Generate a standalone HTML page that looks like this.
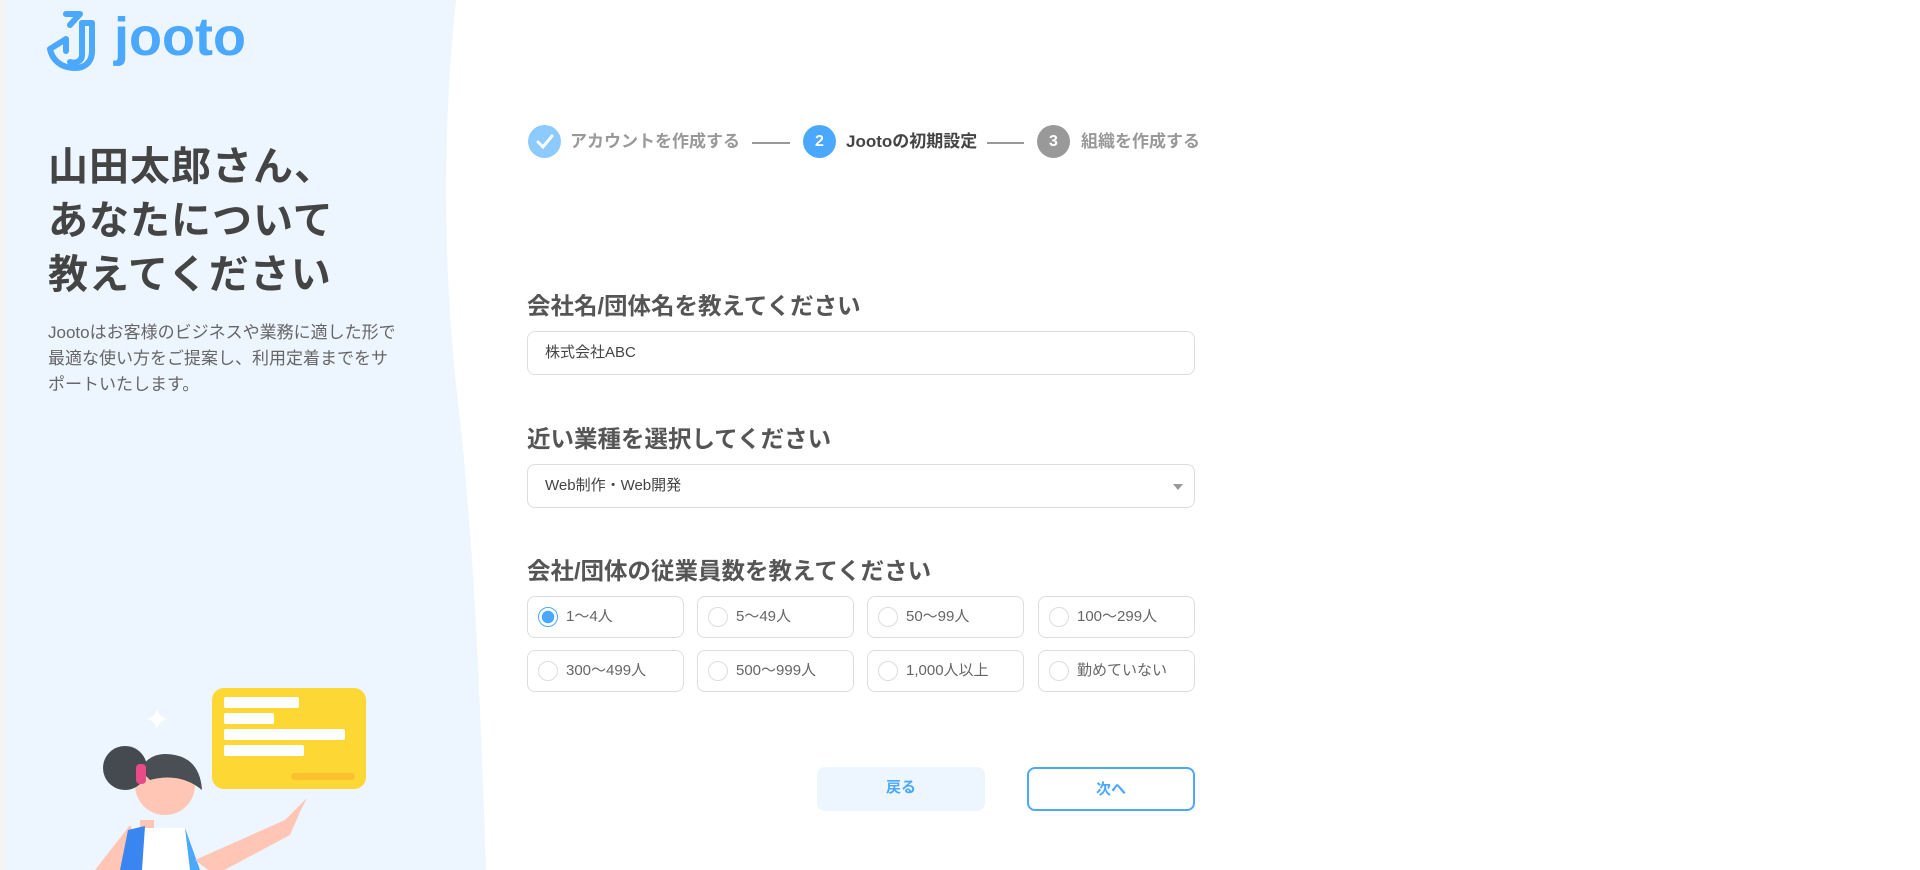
<!DOCTYPE html>
<html><head><meta charset="utf-8"><style>
*{box-sizing:border-box;margin:0;padding:0}
body{width:1920px;height:870px;overflow:hidden;background:#fff;font-family:"Liberation Sans","Noto Sans CJK JP",sans-serif;position:relative;color:#555}
.abs{position:absolute}
.h1{left:48px;top:140px;font-size:40px;font-weight:bold;color:#444;line-height:54px;letter-spacing:1px}
.p{left:48px;top:320px;font-size:17px;color:#666;line-height:26px}
.step{top:130px;font-size:17px;font-weight:bold;color:#999;line-height:24px;white-space:nowrap}
.circ{top:125px;width:33px;height:33px;border-radius:50%;color:#fff;font-size:16px;font-weight:bold;text-align:center;line-height:33px}
.line{top:142px;height:2px;background:#999}
.lbl{left:527px;font-size:23.5px;font-weight:bold;color:#555}
.inp{left:527px;width:668px;height:44px;border:1px solid #ddd;border-radius:8px;font-size:15px;color:#444;padding-left:17px;line-height:42px}
.rb{width:157px;height:42px;border:1px solid #ddd;border-radius:8px;font-size:15px;color:#666;line-height:40px;padding-left:38px}
.rb:before{content:"";position:absolute;left:10px;top:10px;width:20px;height:20px;border:1px solid #ddd;border-radius:50%;box-sizing:border-box}
.rb.on:before{border-color:#4aa8ff;background:radial-gradient(circle,#4aa8ff 0 6px,#fff 6.5px)}
.btn{top:767px;width:168px;height:44px;border-radius:8px;font-size:15px;font-weight:bold;color:#4aa8ff;text-align:center;line-height:42px}
</style></head><body>
<div class="abs" style="left:0;top:0;width:6px;height:870px;background:#f4f4f4"></div>
<svg class="abs" style="left:0;top:0" width="500" height="870"><path d="M6 0 H456 C440 150 445 300 460 420 C475 560 480 700 486 870 H6 Z" fill="#edf5fe"/></svg>
<svg class="abs" style="left:46px;top:9px" width="56" height="64" viewBox="0 0 56 64"><g fill="none" stroke="#4aa8ff" stroke-width="6" stroke-linecap="round" stroke-linejoin="round"><path d="M20 5 H34 L24 16"/><path d="M36 14 H46 V42 C46 54 38 59 29 59 C14 59 6 50 4 40 L20 30 V42"/><path d="M36 14 V46 C36 52 30 55 24 53"/></g></svg>
<div class="abs" style="left:114px;top:10px;font-size:54px;font-weight:bold;color:#4aa8ff;line-height:54px;letter-spacing:0px">jooto</div>
<div class="abs h1">山田太郎さん、<br>あなたについて<br>教えてください</div>
<div class="abs p">Jootoはお客様のビジネスや業務に適した形で<br>最適な使い方をご提案し、利用定着までをサ<br>ポートいたします。</div>
<svg class="abs" style="left:0;top:640px" width="500" height="230">
<rect x="212" y="48" width="154" height="101" rx="12" fill="#fdd835"/>
<rect x="224" y="57" width="75" height="11" rx="2" fill="#fff"/>
<rect x="224" y="73" width="50" height="11" rx="2" fill="#fff"/>
<rect x="224" y="89" width="121" height="11" rx="2" fill="#fff"/>
<rect x="224" y="105" width="80" height="11" rx="2" fill="#fff"/>
<rect x="291" y="133" width="64" height="7" rx="3.5" fill="#fbc02d"/>
<path d="M157 68 Q159 78 168 79 Q159 80 157 90 Q155 80 146 79 Q155 78 157 68Z" fill="#fff"/>
<rect x="140" y="180" width="14" height="20" fill="#ffc6b5"/>
<circle cx="165" cy="145" r="30" fill="#ffc6b5"/>
<circle cx="125" cy="128" r="22" fill="#444a50"/>
<path d="M140 130 Q150 110 175 115 Q200 120 202 150 Q180 132 150 140 Z" fill="#4a4f55"/>
<rect x="136" y="124" width="10" height="20" rx="4" fill="#e84a8a"/>
<path d="M130 185 L150 230 H95 Z" fill="#ffc6b5"/>
<path d="M145 188 H185 L200 230 H140 Z" fill="#fff"/>
<path d="M128 190 L145 186 L142 230 H120 Z" fill="#3a86f0"/>
<path d="M185 188 L200 230 H190 Z" fill="#4aa8ff"/>
<path d="M195 220 L285 180 L307 158 L300 172 L290 195 L215 235 Z" fill="#ffc6b5"/>
</svg>
<div class="abs circ" style="left:528px;background:#8ccaff"><svg width="33" height="33" viewBox="0 0 33 33"><path d="M10 17 L15 22 L24 11" stroke="#fff" stroke-width="3" fill="none" stroke-linecap="round"/></svg></div>
<div class="abs step" style="left:570px">アカウントを作成する</div>
<div class="abs line" style="left:752px;width:38px"></div>
<div class="abs circ" style="left:803px;background:#4aa8ff">2</div>
<div class="abs step" style="left:846px;color:#444">Jootoの初期設定</div>
<div class="abs line" style="left:987px;width:37px"></div>
<div class="abs circ" style="left:1037px;background:#999">3</div>
<div class="abs step" style="left:1081px">組織を作成する</div>
<div class="abs lbl" style="top:287px">会社名/団体名を教えてください</div>
<div class="abs inp" style="top:331px">株式会社ABC</div>
<div class="abs lbl" style="top:420px">近い業種を選択してください</div>
<div class="abs inp" style="top:464px">Web制作・Web開発<span style="position:absolute;right:11px;top:19px;border:5px solid transparent;border-top:6px solid #999;border-bottom:0"></span></div>
<div class="abs lbl" style="top:552px">会社/団体の従業員数を教えてください</div>
<div class="abs rb on" style="left:527px;top:596px">1〜4人</div>
<div class="abs rb" style="left:697px;top:596px">5〜49人</div>
<div class="abs rb" style="left:867px;top:596px">50〜99人</div>
<div class="abs rb" style="left:1038px;top:596px">100〜299人</div>
<div class="abs rb" style="left:527px;top:650px">300〜499人</div>
<div class="abs rb" style="left:697px;top:650px">500〜999人</div>
<div class="abs rb" style="left:867px;top:650px">1,000人以上</div>
<div class="abs rb" style="left:1038px;top:650px">勤めていない</div>
<div class="abs btn" style="left:817px;background:#edf5fe">戻る</div>
<div class="abs btn" style="left:1027px;border:2px solid #4aa8ff;background:#fff">次へ</div>
</body></html>
